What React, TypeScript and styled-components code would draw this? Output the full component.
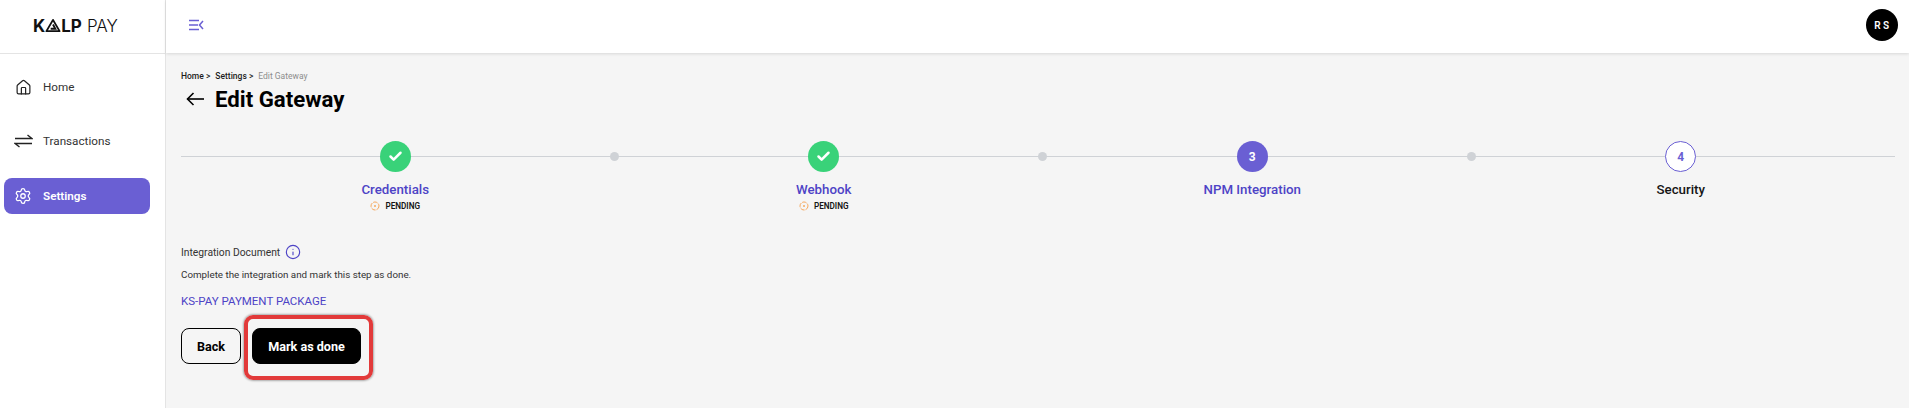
import styled, { createGlobalStyle } from "styled-components";
import { Check, Home, Info, Settings } from "lucide-react";

const PURPLE = "#6a5fd3";
const LINK = "#4d43c6";
const FONT = `"Roboto", "Noto Sans", sans-serif`;

const GlobalStyle = createGlobalStyle`
  html, body {
    margin: 0;
    padding: 0;
    background: #ffffff;
    font-family: ${FONT};
  }
  * {
    box-sizing: border-box;
  }
`;

const Page = styled.div`
  width: 1909px;
  height: 408px;
  display: flex;
  overflow: hidden;
`;

const Sidebar = styled.aside`
  width: 166px;
  flex-shrink: 0;
  background: #fff;
  border-right: 1px solid #e4e4e4;
  display: flex;
  flex-direction: column;
`;

const LogoBar = styled.div`
  height: 54px;
  border-bottom: 1px solid #e4e4e4;
  display: flex;
  align-items: center;
  padding: 0 0 2px 33px;
`;

const LogoText = styled.div`
  display: flex;
  align-items: center;
  font-family: "Inter", sans-serif;
  font-size: 17px;
  line-height: 20px;
  color: #111;
`;

const LogoBold = styled.span`
  font-weight: 700;
`;

const LogoLight = styled.span`
  font-weight: 300;
  margin-left: 5px;
`;

const Nav = styled.nav`
  display: flex;
  flex-direction: column;
  gap: 18px;
  padding: 15px 15px 0 4px;
`;

const NavItem = styled.div<{ $active?: boolean }>`
  height: 36px;
  margin-top: ${(p) => (p.$active ? "1px" : "0")};
  padding-left: 8px;
  display: flex;
  align-items: center;
  gap: 9px;
  border-radius: 8px;
  font-size: 11.7px;
  font-weight: ${(p) => (p.$active ? 600 : 400)};
  color: ${(p) => (p.$active ? "#fff" : "#333")};
  background: ${(p) => (p.$active ? PURPLE : "transparent")};
`;

const NavIcon = styled.span<{ $active?: boolean }>`
  width: 22px;
  display: flex;
  justify-content: center;
  color: ${(p) => (p.$active ? "#fff" : "#222")};
`;

const Right = styled.div`
  flex: 1;
  min-width: 0;
  display: flex;
  flex-direction: column;
`;

const Header = styled.header`
  height: 53px;
  flex-shrink: 0;
  background: #fff;
  box-shadow: 0 1px 3px rgba(0, 0, 0, 0.12);
  display: flex;
  align-items: center;
  justify-content: space-between;
  padding: 0 11px 3px 23px;
  position: relative;
`;

const Avatar = styled.div`
  width: 32px;
  height: 32px;
  border-radius: 50%;
  background: #000;
  color: #fff;
  display: flex;
  align-items: center;
  justify-content: center;
  font-size: 10px;
  font-weight: 600;
  letter-spacing: 2.5px;
  padding-left: 2px;
`;

const Main = styled.main`
  flex: 1;
  background: #f5f5f5;
  padding: 17px 14px 0 15px;
`;

const Breadcrumb = styled.div`
  display: flex;
  gap: 5px;
  font-size: 8.5px;
  line-height: 12px;
  font-weight: 500;
  color: #1c1c1c;
`;

const Current = styled.span`
  color: #8d8d8d;
  font-weight: 400;
`;

const TitleRow = styled.div`
  display: flex;
  align-items: center;
  gap: 11px;
  margin-top: 2px;
  padding-left: 5px;
  height: 30px;
`;

const Title = styled.h1`
  margin: 0;
  font-size: 22.2px;
  line-height: 30px;
  font-weight: 700;
  color: #000;
`;

const Stepper = styled.div`
  position: relative;
  display: grid;
  grid-template-columns: repeat(4, 1fr);
  margin-top: 27px;
  height: 84px;

  &::before {
    content: "";
    position: absolute;
    left: 0;
    right: 0;
    top: 15px;
    height: 1px;
    background: #cfd2d6;
  }
`;

const Step = styled.div`
  position: relative;
  display: flex;
  flex-direction: column;
  align-items: center;
`;

const Connector = styled.span`
  position: absolute;
  right: -9px;
  top: 11px;
  width: 9px;
  height: 9px;
  border-radius: 50%;
  background: #cfd2d6;
`;

const Circle = styled.div<{ $state: "done" | "active" | "todo" }>`
  position: relative;
  width: 31px;
  height: 31px;
  border-radius: 50%;
  display: flex;
  align-items: center;
  justify-content: center;
  font-size: 12px;
  font-weight: 700;
  color: ${(p) => (p.$state === "todo" ? PURPLE : "#fff")};
  background: ${(p) =>
    p.$state === "done" ? "#39d279" : p.$state === "active" ? PURPLE : "#fff"};
  border: ${(p) => (p.$state === "todo" ? `1px solid ${PURPLE}` : "none")};
`;

const StepLabel = styled.div<{ $current?: boolean }>`
  margin-top: 9px;
  font-size: 13.3px;
  line-height: 18px;
  font-weight: 500;
  color: ${(p) => (p.$current ? "#151515" : LINK)};
`;

const Pending = styled.div`
  display: flex;
  align-items: center;
  gap: 5px;
  margin-top: 1px;
  font-size: 8.2px;
  line-height: 12px;
  font-weight: 600;
  color: #151515;
`;

const DocRow = styled.div`
  display: flex;
  align-items: center;
  gap: 5px;
  margin-top: 18px;
  height: 18px;
  font-size: 10.3px;
  color: #333;

  svg {
    color: ${LINK};
  }
`;

const Hint = styled.p`
  margin: 7px 0 0;
  font-size: 9.8px;
  line-height: 14px;
  color: #333;
`;

const PackageLink = styled.a`
  display: block;
  margin-top: 12px;
  font-size: 11.5px;
  line-height: 14px;
  color: ${LINK};
`;

const Actions = styled.div`
  display: flex;
  gap: 11px;
  margin-top: 20px;
`;

const Button = styled.button<{ $primary?: boolean }>`
  position: relative;
  height: 36px;
  padding: 0;
  width: ${(p) => (p.$primary ? "109px" : "60px")};
  border-radius: 8px;
  border: 1px solid #000;
  font-family: ${FONT};
  font-size: 12.6px;
  font-weight: 700;
  color: ${(p) => (p.$primary ? "#fff" : "#000")};
  background: ${(p) => (p.$primary ? "#000" : "transparent")};
`;

const Highlight = styled.span`
  position: absolute;
  left: -9px;
  right: -13px;
  top: -14px;
  bottom: -17px;
  border: 4px solid #e23a3a;
  border-radius: 9px;
  box-shadow: 0 0 2px 1px rgba(0, 0, 0, 0.3);
  pointer-events: none;
`;

function Logo() {
  return (
    <LogoText>
      <LogoBold>K</LogoBold>
      <svg width="16" height="15" viewBox="0 0 17 16" fill="none" stroke="#111" strokeWidth="2">
        <path d="M8.5 2 L15.5 14 H1.5 Z" strokeLinejoin="round" />
        <path d="M8.5 7 L11 11.5 H6" />
      </svg>
      <LogoBold>LP</LogoBold>
      <LogoLight>PAY</LogoLight>
    </LogoText>
  );
}

function MenuIcon() {
  return (
    <svg width="15" height="12" viewBox="0 0 15 12" fill="none" stroke={PURPLE} strokeWidth="1.5">
      <path d="M0 1.5 H10 M0 6 H9 M0 10.5 H10" />
      <path d="M14 2 L10.5 6 L14 10" />
    </svg>
  );
}

function SwapIcon() {
  return (
    <svg width="19" height="14" viewBox="0 0 19 14" fill="none" stroke="currentColor" strokeWidth="1.4">
      <path d="M1 4.5 H18 L13.5 1" />
      <path d="M18 9.5 H1 L5.5 13" />
    </svg>
  );
}

function BackArrow() {
  return (
    <svg width="18" height="14" viewBox="0 0 18 14" fill="none" stroke="#000" strokeWidth="1.6">
      <path d="M18 7 H1.5" />
      <path d="M7.5 1 L1.5 7 L7.5 13" />
    </svg>
  );
}

function PendingIcon() {
  return (
    <svg width="10" height="10" viewBox="0 0 10 10" fill="none" stroke="#f5a85c" strokeWidth="1">
      <circle cx="5" cy="5" r="4" strokeDasharray="4.5 1" />
      <circle cx="5" cy="5" r="1" fill="#f5a85c" stroke="none" />
    </svg>
  );
}

export default function App() {
  return (
    <Page>
      <GlobalStyle />
      <Sidebar>
        <LogoBar>
          <Logo />
        </LogoBar>
        <Nav>
          <NavItem>
            <NavIcon>
              <Home size={17} strokeWidth={1.7} />
            </NavIcon>
            Home
          </NavItem>
          <NavItem>
            <NavIcon>
              <SwapIcon />
            </NavIcon>
            Transactions
          </NavItem>
          <NavItem $active>
            <NavIcon $active>
              <Settings size={18} strokeWidth={1.7} />
            </NavIcon>
            Settings
          </NavItem>
        </Nav>
      </Sidebar>
      <Right>
        <Header>
          <MenuIcon />
          <Avatar>RS</Avatar>
        </Header>
        <Main>
          <Breadcrumb>
            <span>Home &gt;</span>
            <span>Settings &gt;</span>
            <Current>Edit Gateway</Current>
          </Breadcrumb>
          <TitleRow>
            <BackArrow />
            <Title>Edit Gateway</Title>
          </TitleRow>
          <Stepper>
            <Step>
              <Circle $state="done">
                <Check size={15} strokeWidth={4} />
              </Circle>
              <StepLabel>Credentials</StepLabel>
              <Pending>
                <PendingIcon />
                PENDING
              </Pending>
              <Connector />
            </Step>
            <Step>
              <Circle $state="done">
                <Check size={15} strokeWidth={4} />
              </Circle>
              <StepLabel>Webhook</StepLabel>
              <Pending>
                <PendingIcon />
                PENDING
              </Pending>
              <Connector />
            </Step>
            <Step>
              <Circle $state="active">3</Circle>
              <StepLabel>NPM Integration</StepLabel>
              <Connector />
            </Step>
            <Step>
              <Circle $state="todo">4</Circle>
              <StepLabel $current>Security</StepLabel>
            </Step>
          </Stepper>
          <DocRow>
            Integration Document
            <Info size={16} strokeWidth={1.7} />
          </DocRow>
          <Hint>Complete the integration and mark this step as done.</Hint>
          <PackageLink>KS-PAY PAYMENT PACKAGE</PackageLink>
          <Actions>
            <Button>Back</Button>
            <Button $primary>
              Mark as done
              <Highlight />
            </Button>
          </Actions>
        </Main>
      </Right>
    </Page>
  );
}
